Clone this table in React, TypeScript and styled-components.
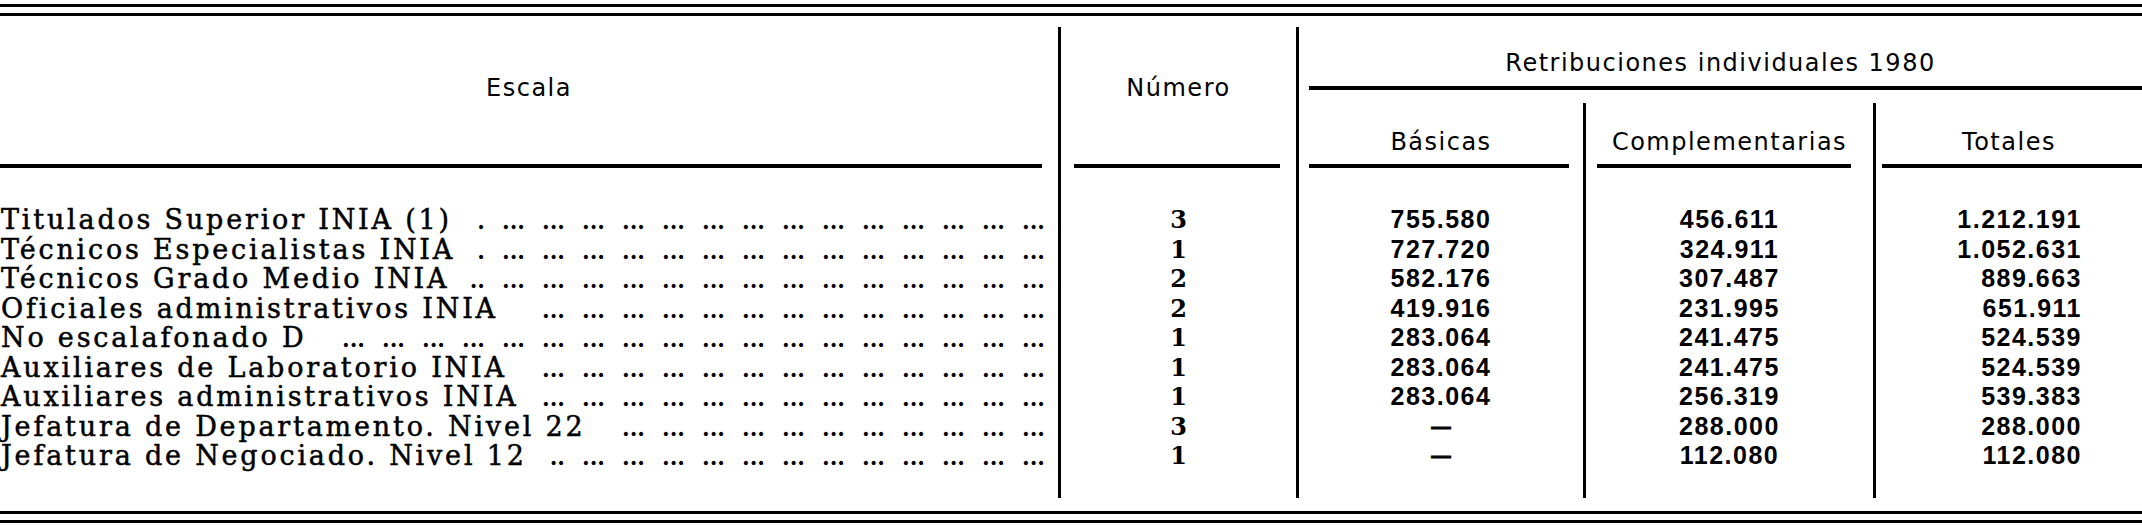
import React, { useLayoutEffect, useRef, useState } from "react";
import styled, { createGlobalStyle } from "styled-components";

const COLS = "1061px 238px 287px 290px 266px";
const ROW_H = "29.5px";
const DOT_PITCH = 40;
const DOT_WIDTH = 8.4;
const DOT_GAP = 15;

const rows = [
    { label: "Titulados Superior INIA (1)", num: "3", basic: "755.580", extra: "456.611", total: "1.212.191" },
    { label: "Técnicos Especialistas INIA", num: "1", basic: "727.720", extra: "324.911", total: "1.052.631" },
    { label: "Técnicos Grado Medio INIA", num: "2", basic: "582.176", extra: "307.487", total: "889.663" },
    { label: "Oficiales administrativos INIA", num: "2", basic: "419.916", extra: "231.995", total: "651.911" },
    { label: "No escalafonado D", num: "1", basic: "283.064", extra: "241.475", total: "524.539" },
    { label: "Auxiliares de Laboratorio INIA", num: "1", basic: "283.064", extra: "241.475", total: "524.539" },
    { label: "Auxiliares administrativos INIA", num: "1", basic: "283.064", extra: "256.319", total: "539.383" },
    { label: "Jefatura de Departamento. Nivel 22", num: "3", basic: "—", extra: "288.000", total: "288.000" },
    { label: "Jefatura de Negociado. Nivel 12", num: "1", basic: "—", extra: "112.080", total: "112.080" },
];

// fills the space after a label with "..." groups, right aligned so they line up row to row
const LeaderDots = () => {
    const ref = useRef<HTMLSpanElement>(null);
    const [groups, setGroups] = useState<string[]>([]);

    useLayoutEffect(() => {
        if (!ref.current) return;
        const width = ref.current.clientWidth;
        const full = Math.max(0, Math.floor(width / DOT_PITCH));
        const rest = width - full * DOT_PITCH;
        const partial = Math.min(3, Math.max(0, Math.floor((rest - DOT_GAP) / DOT_WIDTH)));
        const list = Array(full).fill("...");
        if (partial > 0) list.unshift(".".repeat(partial));
        setGroups(list);
    }, []);

    return (
        <Leader ref={ref}>
            {groups.map((g, i) => (
                <DotGroup key={i} $partial={g.length < 3}>
                    {g}
                </DotGroup>
            ))}
        </Leader>
    );
};

export default function App() {
    return (
        <>
            <GlobalStyle />
            <Page>
                <DoubleRule $top={4} />
                <Header>
                    <StubHead>
                        <HeadText $pad="0 0 16px">Escala</HeadText>
                        <Rule $left={0} $right={16} />
                    </StubHead>
                    <StubHead>
                        <HeadText $pad="0 0 16px">Número</HeadText>
                        <Rule $left={13} $right={16} />
                    </StubHead>
                    <GroupHead>
                        <HeadText $pad="12px 0 0">Retribuciones individuales 1980</HeadText>
                        <Rule $left={10} $right={0} />
                    </GroupHead>
                    <SubHead $divider>
                        <HeadText $pad="16px 0 0">Básicas</HeadText>
                        <Rule $left={10} $right={14} />
                    </SubHead>
                    <SubHead $divider>
                        <HeadText $pad="16px 0 0">Complementarias</HeadText>
                        <Rule $left={11} $right={22} />
                    </SubHead>
                    <SubHead>
                        <HeadText $pad="16px 0 0">Totales</HeadText>
                        <Rule $left={6} $right={0} />
                    </SubHead>
                </Header>
                <Body>
                    <Column $divider>
                        {rows.map((r) => (
                            <LabelRow key={r.label}>
                                <Label>{r.label}</Label>
                                <LeaderDots />
                            </LabelRow>
                        ))}
                    </Column>
                    <Column $divider $align="center">
                        {rows.map((r, i) => (
                            <CountCell key={i}>{r.num}</CountCell>
                        ))}
                    </Column>
                    <Column $divider $align="center">
                        {rows.map((r, i) => (
                            <MoneyCell key={i} $dash={r.basic === "—"}>
                                {r.basic}
                            </MoneyCell>
                        ))}
                    </Column>
                    <Column $divider $align="center">
                        {rows.map((r, i) => (
                            <MoneyCell key={i}>{r.extra}</MoneyCell>
                        ))}
                    </Column>
                    <Column $align="flex-end" $padRight={60}>
                        {rows.map((r, i) => (
                            <MoneyCell key={i}>{r.total}</MoneyCell>
                        ))}
                    </Column>
                </Body>
                <DoubleRule $top={13} />
            </Page>
        </>
    );
}

const GlobalStyle = createGlobalStyle`
    html, body {
        margin: 0;
        padding: 0;
        background: #ffffff;
    }

    body {
        color: #000000;
    }
`;

const Page = styled.div`
    width: 2142px;
    height: 526px;
    overflow: hidden;
    background: #ffffff;
`;

const DoubleRule = styled.div<{ $top: number }>`
    margin-top: ${(p) => p.$top}px;
    height: 6px;
    border-top: 3px solid #000;
    border-bottom: 3px solid #000;
`;

const Header = styled.div`
    margin-top: 11px;
    display: grid;
    grid-template-columns: ${COLS};
    grid-template-rows: 76px 65px;
`;

const StubHead = styled.div`
    grid-row: 1 / 3;
    border-right: 3px solid #000;

    display: flex;
    flex-direction: column;
`;

const GroupHead = styled.div`
    grid-column: 3 / 6;
    grid-row: 1;
    padding-bottom: 13px;

    display: flex;
    flex-direction: column;
`;

const SubHead = styled.div<{ $divider?: boolean }>`
    grid-row: 2;
    border-right: ${(p) => (p.$divider ? "3px solid #000" : "none")};

    display: flex;
    flex-direction: column;
`;

const HeadText = styled.div<{ $pad: string }>`
    flex: 1;
    padding: ${(p) => p.$pad};

    display: flex;
    align-items: center;
    justify-content: center;

    font-family: "DejaVu Sans", sans-serif;
    font-size: 24px;
    letter-spacing: 1.5px;
    white-space: nowrap;
`;

const Rule = styled.div<{ $left: number; $right: number }>`
    height: 4px;
    margin: 0 ${(p) => p.$right}px 0 ${(p) => p.$left}px;
    background: #000;
`;

const Body = styled.div`
    display: grid;
    grid-template-columns: ${COLS};
`;

const Column = styled.div<{ $divider?: boolean; $align?: string; $padRight?: number }>`
    border-right: ${(p) => (p.$divider ? "3px solid #000" : "none")};
    padding: 37px ${(p) => p.$padRight ?? 0}px 27px 0;

    display: flex;
    flex-direction: column;
    align-items: ${(p) => p.$align ?? "stretch"};
`;

const LabelRow = styled.div`
    height: ${ROW_H};
    padding: 0 13px 0 1px;

    display: flex;
    align-items: baseline;

    font-family: "DejaVu Serif", serif;
    line-height: ${ROW_H};
    white-space: nowrap;
`;

const Label = styled.span`
    font-size: 27px;
    letter-spacing: 2.8px;
    -webkit-text-stroke: 0.5px #000;
`;

const Leader = styled.span`
    flex: 1;
    min-width: 0;
    margin-left: 4px;

    display: flex;
    justify-content: flex-end;
    align-items: baseline;

    font-size: 22px;
    font-weight: bold;
`;

const DotGroup = styled.span<{ $partial?: boolean }>`
    flex-shrink: 0;
    width: ${(p) => (p.$partial ? "auto" : "25px")};
    margin-left: ${DOT_GAP}px;
    text-align: right;
`;

const CountCell = styled.div`
    height: ${ROW_H};
    line-height: ${ROW_H};

    font-family: "DejaVu Serif", serif;
    font-size: 24px;
    font-weight: bold;
`;

const MoneyCell = styled.div<{ $dash?: boolean }>`
    height: ${ROW_H};
    line-height: ${ROW_H};
    white-space: nowrap;

    font-family: "Liberation Sans", Arial, sans-serif;
    font-size: ${(p) => (p.$dash ? "19px" : "25px")};
    font-weight: bold;
    letter-spacing: ${(p) => (p.$dash ? "0" : "1.5px")};
    -webkit-text-stroke: ${(p) => (p.$dash ? "1.2px #000" : "0")};
`;
